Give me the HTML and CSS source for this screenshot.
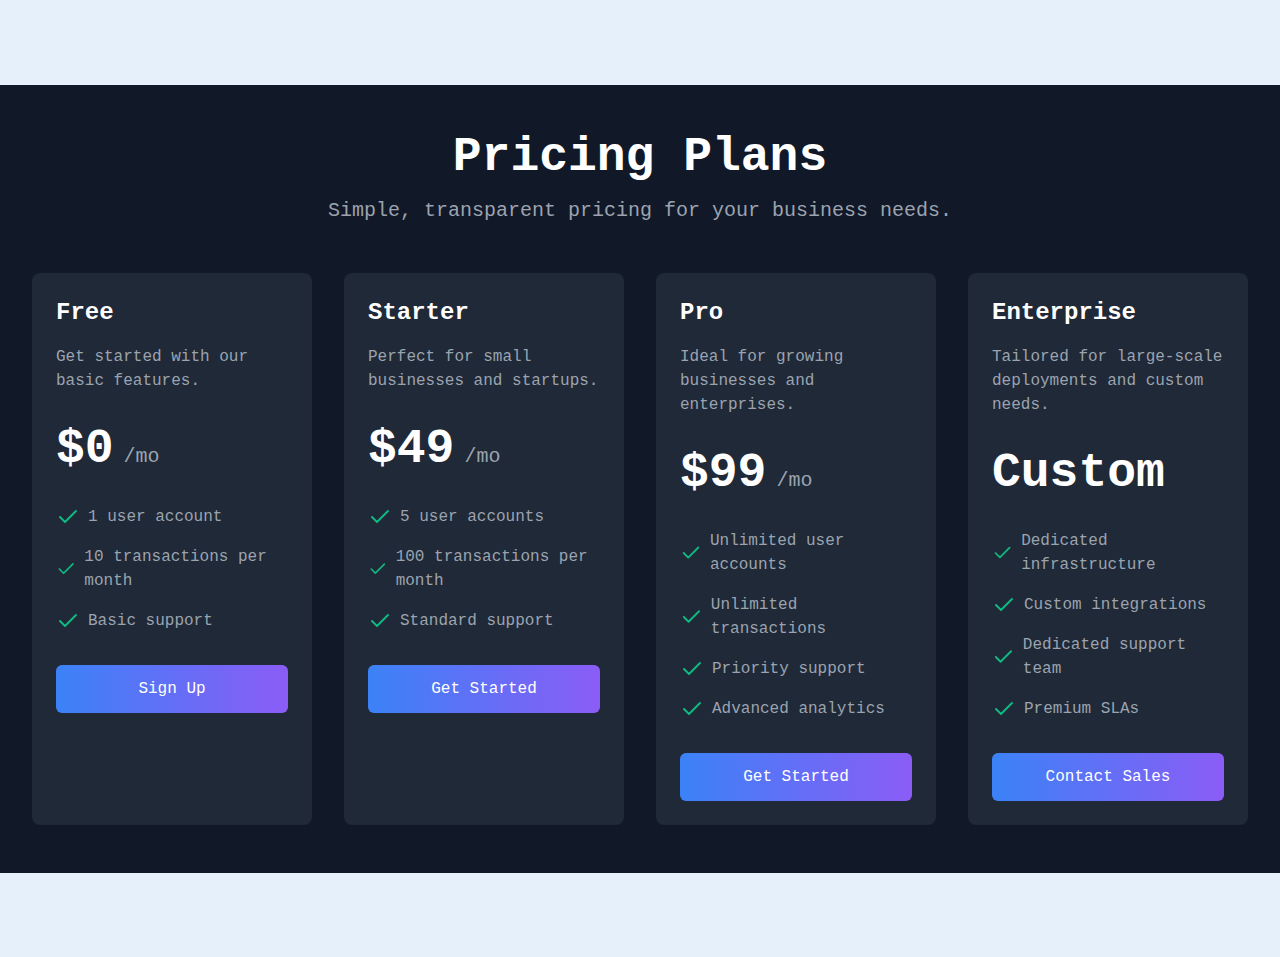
FILE: index.html
```html
<!DOCTYPE html>
<html>
    <head>
        <meta charset="utf-8" />
        <title>Pricing Plans</title>
        <meta name="viewport" content="width=device-width, initial-scale=1.0" />
        <link rel="stylesheet" href="styles.css">
    </head>

    <body>
        <section class="pricing">
            <h1>Pricing Plans</h1>
            <p class="subtitle">Simple, transparent pricing for your business needs.</p>

            <div class="plans">
                <div class="plan">
                    <h3>Free</h3>
                    <p class="desc">Get started with our basic features.</p>
                    <div class="price"><span class="amount">$0</span><span class="per">/mo</span></div>
                    <ul>
                        <li><svg viewBox="0 0 24 24" width="24" height="24"><polyline points="20 6 9 17 4 12" /></svg><span>1 user account</span></li>
                        <li><svg viewBox="0 0 24 24" width="24" height="24"><polyline points="20 6 9 17 4 12" /></svg><span>10 transactions per month</span></li>
                        <li><svg viewBox="0 0 24 24" width="24" height="24"><polyline points="20 6 9 17 4 12" /></svg><span>Basic support</span></li>
                    </ul>
                    <button>Sign Up</button>
                </div>

                <div class="plan">
                    <h3>Starter</h3>
                    <p class="desc">Perfect for small businesses and startups.</p>
                    <div class="price"><span class="amount">$49</span><span class="per">/mo</span></div>
                    <ul>
                        <li><svg viewBox="0 0 24 24" width="24" height="24"><polyline points="20 6 9 17 4 12" /></svg><span>5 user accounts</span></li>
                        <li><svg viewBox="0 0 24 24" width="24" height="24"><polyline points="20 6 9 17 4 12" /></svg><span>100 transactions per month</span></li>
                        <li><svg viewBox="0 0 24 24" width="24" height="24"><polyline points="20 6 9 17 4 12" /></svg><span>Standard support</span></li>
                    </ul>
                    <button>Get Started</button>
                </div>

                <div class="plan">
                    <h3>Pro</h3>
                    <p class="desc">Ideal for growing businesses and enterprises.</p>
                    <div class="price"><span class="amount">$99</span><span class="per">/mo</span></div>
                    <ul>
                        <li><svg viewBox="0 0 24 24" width="24" height="24"><polyline points="20 6 9 17 4 12" /></svg><span>Unlimited user accounts</span></li>
                        <li><svg viewBox="0 0 24 24" width="24" height="24"><polyline points="20 6 9 17 4 12" /></svg><span>Unlimited transactions</span></li>
                        <li><svg viewBox="0 0 24 24" width="24" height="24"><polyline points="20 6 9 17 4 12" /></svg><span>Priority support</span></li>
                        <li><svg viewBox="0 0 24 24" width="24" height="24"><polyline points="20 6 9 17 4 12" /></svg><span>Advanced analytics</span></li>
                    </ul>
                    <button>Get Started</button>
                </div>

                <div class="plan">
                    <h3>Enterprise</h3>
                    <p class="desc">Tailored for large-scale deployments and custom needs.</p>
                    <div class="price"><span class="amount">Custom</span></div>
                    <ul>
                        <li><svg viewBox="0 0 24 24" width="24" height="24"><polyline points="20 6 9 17 4 12" /></svg><span>Dedicated infrastructure</span></li>
                        <li><svg viewBox="0 0 24 24" width="24" height="24"><polyline points="20 6 9 17 4 12" /></svg><span>Custom integrations</span></li>
                        <li><svg viewBox="0 0 24 24" width="24" height="24"><polyline points="20 6 9 17 4 12" /></svg><span>Dedicated support team</span></li>
                        <li><svg viewBox="0 0 24 24" width="24" height="24"><polyline points="20 6 9 17 4 12" /></svg><span>Premium SLAs</span></li>
                    </ul>
                    <button>Contact Sales</button>
                </div>
            </div>
        </section>
    </body>
</html>
```

FILE: styles.css
```css
body {
    margin: 0;
    min-height: 100vh;
    display: flex;
    align-items: center;
    background: #e6f0fa;
    font-family: "Liberation Mono", monospace;
}

.pricing {
    flex: 1;
    background: #111827;
    padding: 48px 32px;
    text-align: center;
}

h1 {
    margin: 0 0 16px;
    font-size: 48px;
    line-height: 48px;
    font-weight: bold;
    color: #ffffff;
}

.subtitle {
    margin: 0 0 48px;
    font-size: 20px;
    line-height: 28px;
    color: #9ca3af;
}

.plans {
    display: grid;
    grid-template-columns: repeat(4, 1fr);
    gap: 32px;
    text-align: left;
}

.plan {
    background: #1f2937;
    border-radius: 8px;
    padding: 24px;
}

h3 {
    margin: 0 0 16px;
    font-size: 24px;
    line-height: 32px;
    font-weight: bold;
    color: #ffffff;
}

.desc {
    margin: 0 0 32px;
    font-size: 16px;
    line-height: 24px;
    color: #9ca3af;
}

.price {
    display: flex;
    align-items: baseline;
    margin-bottom: 32px;
}

.amount {
    font-size: 48px;
    line-height: 48px;
    font-weight: bold;
    color: #ffffff;
}

.per {
    margin-left: 10px;
    font-size: 20px;
    line-height: 28px;
    color: #9ca3af;
}

ul {
    list-style: none;
    margin: 0 0 32px;
    padding: 0;
    display: flex;
    flex-direction: column;
    gap: 16px;
}

li {
    display: flex;
    align-items: center;
    font-size: 16px;
    line-height: 24px;
    color: #9ca3af;
}

li svg {
    margin-right: 8px;
    fill: none;
    stroke: #10b981;
    stroke-width: 2;
    stroke-linecap: round;
    stroke-linejoin: round;
}

button {
    display: block;
    width: 100%;
    padding: 12px 16px;
    border: 0;
    border-radius: 6px;
    background: linear-gradient(to right, #3b82f6, #8b5cf6);
    color: #ffffff;
    font-family: inherit;
    font-size: 16px;
    line-height: 24px;
}
```
